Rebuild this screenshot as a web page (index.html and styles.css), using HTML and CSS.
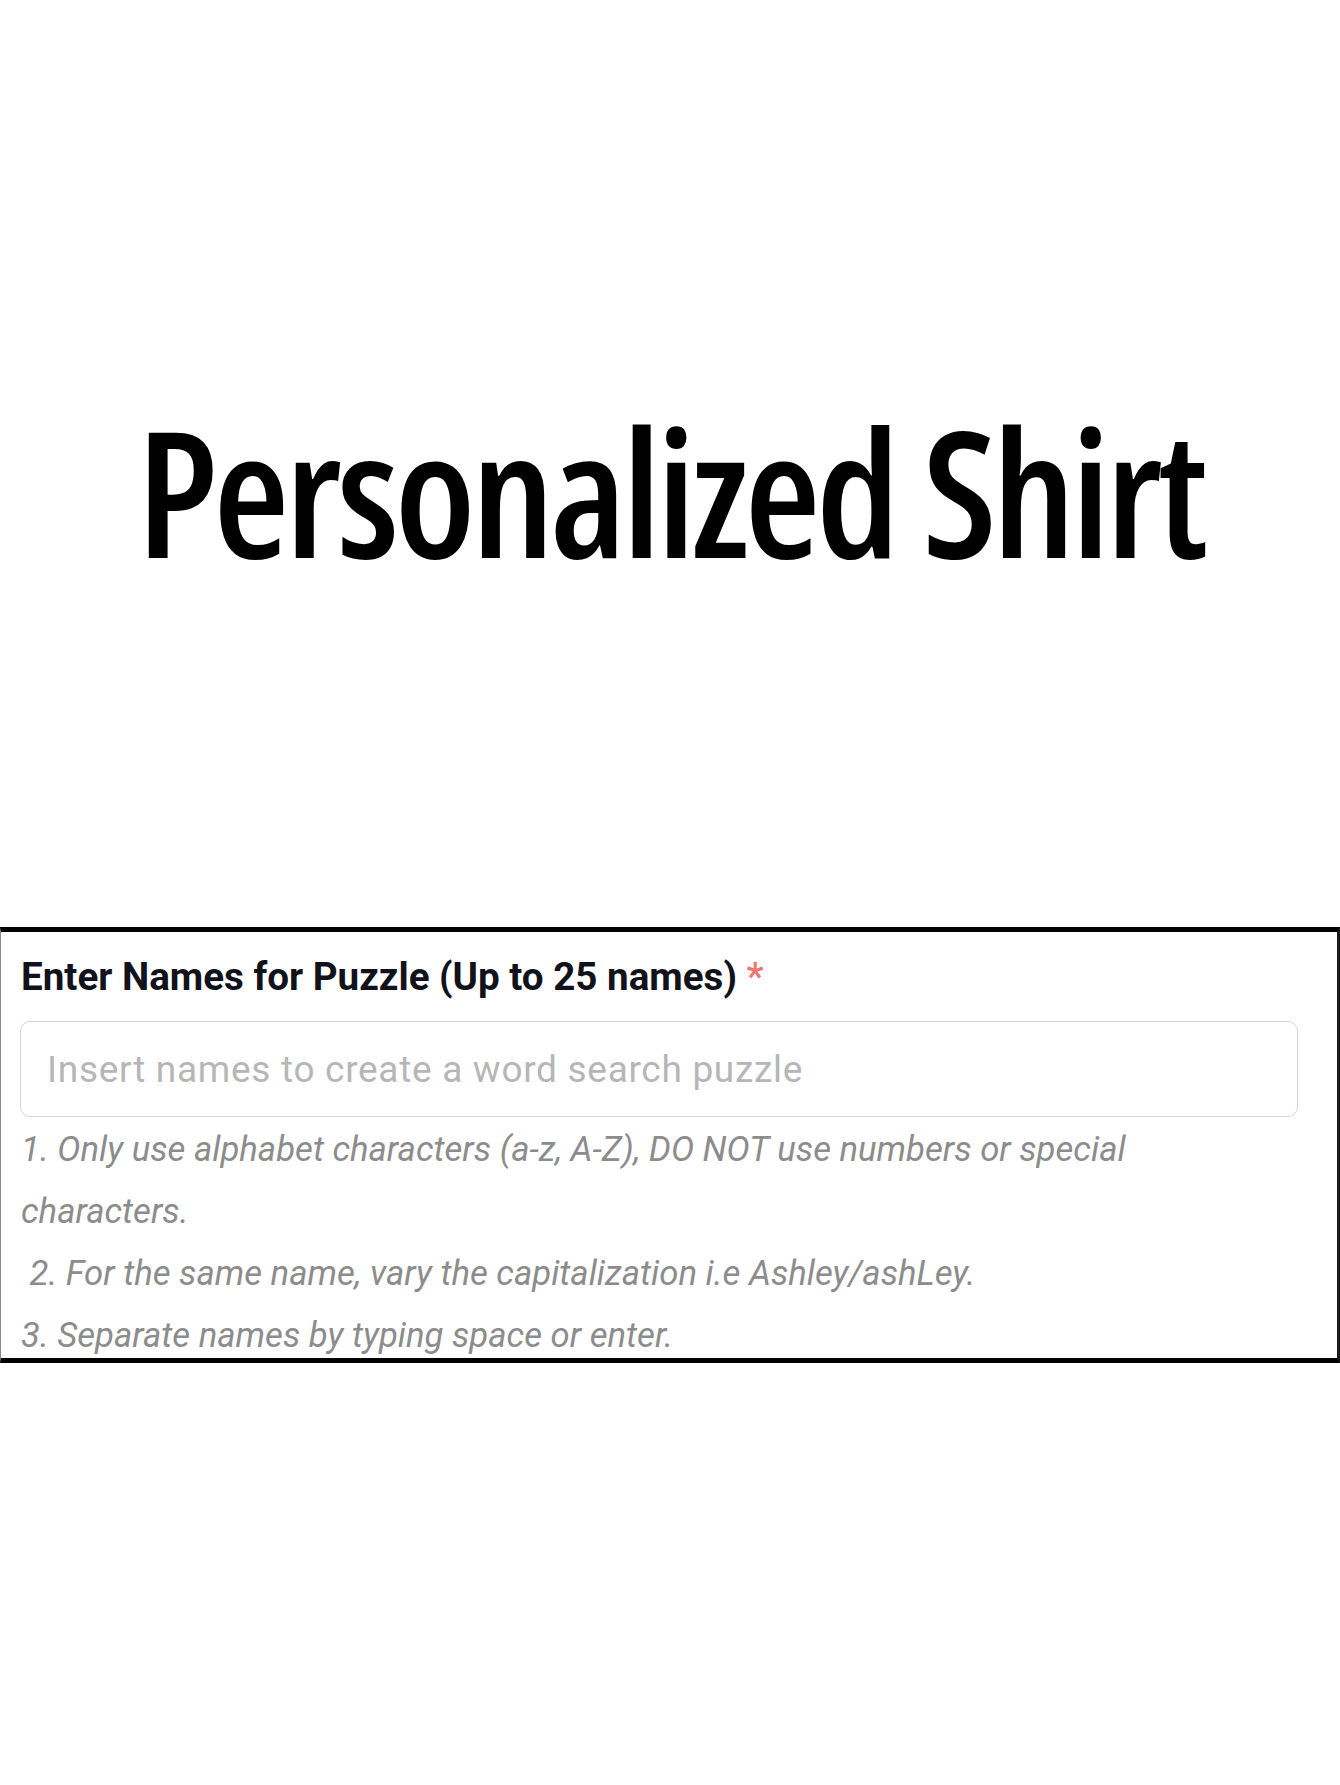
FILE: index.html
```html
<!doctype html>
<html lang="en">

<head>
  <meta charset="utf-8">
  <title>Personalized Shirt</title>
  <link rel="stylesheet" href="styles.css">
</head>

<body>
  <header class="hero">
    <h1 class="hero-title">Personalized Shirt</h1>
  </header>

  <section class="names-field">
    <label class="names-label" for="names">Enter Names for Puzzle (Up to 25 names) <span class="req">*</span></label>
    <div class="names-input">
      <input id="names" type="text" placeholder="Insert names to create a word search puzzle">
    </div>
    <p class="names-help">1. Only use alphabet characters (a-z, A-Z), DO NOT use numbers or special characters.<br>&nbsp;2. For the same name, vary the capitalization i.e Ashley/ashLey.<br>3. Separate names by typing space or enter.</p>
  </section>
</body>

</html>
```

FILE: styles.css
```css
html { background-color:#fff; }
body { margin:0; font-family:Roboto,"Liberation Sans",sans-serif; }

.hero { padding-top:400px; height:927px; box-sizing:border-box; }
.hero-title { margin:0; text-align:center; font-family:"Open Sans","Liberation Sans Narrow","DejaVu Sans Condensed",sans-serif; font-stretch:75%; font-weight:600; font-size:175px; line-height:180px; color:#000; letter-spacing:-4.6px; }

.names-field { border-top:5px solid #000; border-bottom:5px solid #000; border-left:1px solid #8a8a8a; border-right:3px solid #1a1a1a; padding:23px 39px 0 19px; height:436px; box-sizing:border-box; }
.names-label { display:block; font-size:38.6px; font-weight:700; color:#11121c; line-height:44px; padding-left:1px; }
.req { color:#f47272; font-weight:500; }

.names-input { margin-top:22px; }
.names-input input { display:block; width:100%; box-sizing:border-box; height:96px; border:1.5px solid #d6d6da; border-radius:10px; padding:0 26px; font-family:Roboto,sans-serif; font-size:37px; letter-spacing:0.7px; color:#333; background:#fff; outline:none; }
.names-input input::placeholder { color:#b6b6b6; }

.names-help { margin:1px 0 0; max-width:1200px; font-size:34.7px; font-style:italic; line-height:62px; color:#8c8c8c; padding-left:1px; }
```
